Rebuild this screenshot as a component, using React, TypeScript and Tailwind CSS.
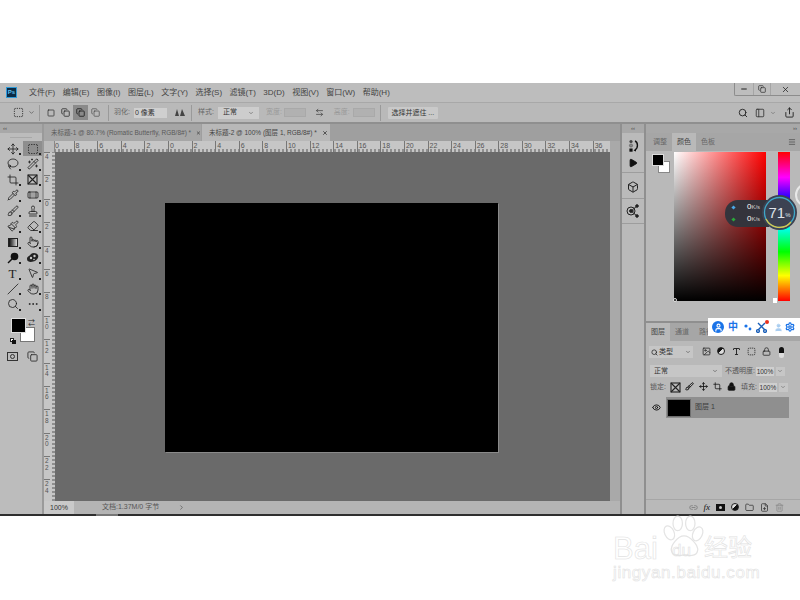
import React from 'react';
import {
  Move, SquareDashed, Lasso, WandSparkles, Crop, Pipette, Bandage, Brush, Stamp, Paintbrush, Eraser, Pointer,
  MousePointer2, Slash, Hand, Search, Ellipsis, ChevronDown, ChevronRight, Square, Copy, ArrowLeftRight, Share, PanelLeft,
  Minus, X, Play, Box, Image, Type, Lock, Eye, Link2, Folder, Trash2, FilePlus, Menu, Settings, User,
} from 'lucide-react';

const font = "font-['Liberation_Sans','Noto_Sans_CJK_SC',sans-serif]";

const menus = ['文件(F)', '编辑(E)', '图像(I)', '图层(L)', '文字(Y)', '选择(S)', '滤镜(T)', '3D(D)', '视图(V)', '窗口(W)', '帮助(H)'];
const hRuler = ['8', '6', '4', '2', '0', '2', '4', '6', '8', '10', '12', '14', '16', '18', '20', '22', '24', '26', '28', '30', '32', '34', '36'];
const vRuler = ['4', '2', '0', '2', '4', '6', '8', '10', '12', '14', '16', '18', '20', '22', '24'];

const SliceIcon = () => (
  <svg width="11" height="11" viewBox="0 0 11 11" fill="none" stroke="#222" strokeWidth="1.1">
    <rect x="1" y="1" width="9" height="9" />
    <path d="M1 1l9 9M10 1l-9 9" />
  </svg>
);
const GradientIcon = () => <div className="w-[10px] h-[9px] border border-[#222] bg-gradient-to-r from-[#111] to-[#ddd]" />;
const DodgeIcon = () => (
  <svg width="12" height="12" viewBox="0 0 12 12">
    <circle cx="7.5" cy="4.5" r="3.8" fill="#111" />
    <path d="M5 7L1 11" stroke="#111" strokeWidth="1.4" />
  </svg>
);
const SpongeIcon = () => (
  <svg width="13" height="11" viewBox="0 0 13 11">
    <path d="M1 7c0-3 3-3 4-5 2-2 6-1 7 1 1 3-1 4-3 6-2 1-8 2-8-2z" fill="#222" />
    <circle cx="5" cy="6" r="1.2" fill="#ccc" />
    <circle cx="8.5" cy="4" r="1.2" fill="#ccc" />
    <circle cx="8" cy="7.5" r="0.8" fill="#ccc" />
  </svg>
);
const HistoryIcon = () => (
  <svg width="11" height="14" viewBox="0 0 11 14">
    <circle cx="3" cy="2.5" r="1.6" fill="#444" />
    <circle cx="3" cy="6.5" r="1.6" fill="#888" stroke="#444" strokeWidth="0.5" />
    <rect x="1.4" y="9.5" width="3.2" height="3.2" fill="#111" />
    <path d="M7 2c3 1 3.5 7 0 9" fill="none" stroke="#111" strokeWidth="1.4" />
    <path d="M5.5 11.5l2.5-2v3z" fill="#111" />
  </svg>
);
const PropsIcon = () => (
  <svg width="14" height="14" viewBox="0 0 14 14" fill="none" stroke="#222" strokeWidth="1">
    <circle cx="5" cy="7" r="4" />
    <circle cx="5" cy="7" r="1.4" fill="#222" />
    <path d="M5 7l6-5M5 7l6 5M5 7h3" />
    <circle cx="11" cy="2" r="1.3" fill="#222" />
    <circle cx="11" cy="12" r="1.3" fill="#222" />
  </svg>
);

const small = { size: 12, color: '#1c1c1c', strokeWidth: 1.6 };

const tools: [React.ReactNode, React.ReactNode][] = [
  [<Move {...small} />, <SquareDashed {...small} />],
  [<Lasso {...small} />, <WandSparkles {...small} />],
  [<Crop {...small} />, <SliceIcon />],
  [<Pipette {...small} />, <Bandage {...small} />],
  [<Brush {...small} />, <Stamp {...small} />],
  [<Paintbrush {...small} />, <Eraser {...small} />],
  [<GradientIcon />, <Pointer {...small} />],
  [<DodgeIcon />, <SpongeIcon />],
  [<span className="font-['Liberation_Serif',serif] text-[13px] leading-none text-[#222]">T</span>, <MousePointer2 {...small} />],
  [<Slash {...small} />, <Hand {...small} />],
  [<Search {...small} />, <Ellipsis {...small} />],
];

const Sep = ({ className = '' }: { className?: string }) => <div className={`w-px h-[16px] bg-[#9a9a9a] ${className}`} />;

const MenuBar = () => (
  <div className="h-[19px] flex items-center bg-[#bdbdbd] relative">
    <div className="ml-[6px] w-[11px] h-[11px] bg-[#0b2a44] border border-[#2f9bd8] text-[#5cc0f0] text-[6px] leading-[9px] text-center font-bold">Ps</div>
    <div className="ml-[12px] flex gap-[7.5px] text-[8px] text-[#444]">
      {menus.map((m) => <span key={m} className="whitespace-nowrap">{m}</span>)}
    </div>
    <div className="ml-auto self-start h-[13px] w-[66px] flex items-center border-l border-b border-[#8c8c8c] rounded-bl-[2px] text-[#222]">
      <div className="w-[19px] flex justify-center border-r border-[#a5a5a5] h-full items-center"><Minus size={8} strokeWidth={3} /></div>
      <div className="w-[17px] flex justify-center border-r border-[#a5a5a5] h-full items-center"><Copy size={8} strokeWidth={2} /></div>
      <div className="flex-1 flex justify-center"><X size={9} strokeWidth={2} /></div>
    </div>
  </div>
);

const OptionsBar = () => (
  <div className="h-[22px] flex items-center bg-[#b9b9b9] border-t border-[#a8a8a8] border-b-2 border-b-[#8f8f8f] text-[7px] text-[#666]">
    <SquareDashed size={11} color="#333" className="ml-[13px]" />
    <ChevronDown size={7} color="#444" className="ml-[4px]" />
    <Sep className="ml-[4px]" />
    <Square size={8} color="#222" strokeWidth={2} className="ml-[7px]" />
    <Copy size={9} color="#222" strokeWidth={2} className="ml-[6px]" />
    <div className="ml-[3px] w-[15px] h-[15px] bg-[#8a8a8a] flex items-center justify-center"><Copy size={9} color="#111" strokeWidth={2} /></div>
    <Copy size={9} color="#333" strokeWidth={1.5} className="ml-[3px]" />
    <Sep className="ml-[8px]" />
    <span className="ml-[5px] whitespace-nowrap">羽化:</span>
    <div className="ml-[4px] w-[33px] h-[10px] bg-[#cfcfcf] text-[#333] leading-[10px] pl-[1px] whitespace-nowrap">0 像素</div>
    <svg width="10" height="7" viewBox="0 0 10 7" className="ml-[8px]"><path d="M0 7L2 0l2 7zM5 7l2-7 3 7z" fill="#444" /></svg>
    <Sep className="ml-[6px]" />
    <span className="ml-[6px] whitespace-nowrap">样式:</span>
    <div className="ml-[4px] w-[41px] h-[12px] bg-[#cdcdcd] text-[#333] flex items-center justify-between px-[5px]">正常<ChevronDown size={6} color="#444" /></div>
    <span className="ml-[7px] whitespace-nowrap text-[#999]">宽度:</span>
    <div className="ml-[2px] w-[22px] h-[9px] bg-[#b1b1b1] border border-[#a9a9a9]" />
    <ArrowLeftRight size={9} color="#444" className="ml-[9px]" />
    <span className="ml-[10px] whitespace-nowrap text-[#999]">高度:</span>
    <div className="ml-[3px] w-[22px] h-[9px] bg-[#b1b1b1] border border-[#a9a9a9]" />
    <Sep className="ml-[5px]" />
    <div className="ml-[7px] w-[50px] h-[12px] bg-[#c9c9c9] text-[#333] leading-[12px] text-center rounded-[1px] whitespace-nowrap">选择并遮住 ...</div>
    <Search size={10} color="#222" strokeWidth={2.2} className="ml-auto" />
    <PanelLeft size={10} color="#333" className="ml-[7px]" />
    <ChevronDown size={6} color="#555" className="ml-[5px]" />
    <Share size={11} color="#222" strokeWidth={2} className="ml-[8px] mr-[5px]" />
  </div>
);

const ToolCell = ({ children, active }: { children: React.ReactNode; active?: boolean }) => (
  <div className={`relative w-[19px] h-[15px] flex items-center justify-center ${active ? 'bg-[#8e8e8e]' : ''}`}>
    {children}
    <span className="absolute right-[1px] bottom-[1px] w-[2px] h-[2px] bg-[#222]" />
  </div>
);

const Toolbar = () => (
  <div className="w-[44px] shrink-0 bg-[#bcbcbc] border-r-2 border-[#9a9a9a] flex flex-col">
    <div className="h-[9px] bg-[#a8a8a8] text-[6px] leading-[8px] text-[#444] pl-[3px]">‹‹</div>
    <div className="h-[8px] flex justify-center items-center"><div className="w-[22px] h-px bg-[#a8a8a8]" /></div>
    <div className="pl-[3px] flex flex-col gap-[0.6px]">
      {tools.map((row, i) => (
        <div key={i} className="flex gap-[1px]">
          <ToolCell>{row[0]}</ToolCell>
          <ToolCell active={i === 0}>{row[1]}</ToolCell>
        </div>
      ))}
    </div>
    <div className="relative h-[32px] mt-[6px]">
      <div className="absolute left-[11px] top-0 w-[15px] h-[15px] bg-black border border-[#ddd] z-10" />
      <div className="absolute left-[20px] top-[9px] w-[15px] h-[15px] bg-white border border-[#777]" />
      <div className="absolute left-[10px] top-[20px] w-[4px] h-[4px] bg-white border border-[#222]" />
      <div className="absolute left-[12px] top-[22px] w-[4px] h-[4px] bg-[#111]" />
      <div className="absolute left-[28px] top-[1px] text-[7px] leading-none text-[#222]">⇄</div>
    </div>
    <div className="mt-[1px] flex pl-[7px] gap-[9px] items-center">
      <div className="w-[11px] h-[9px] border border-[#333] flex items-center justify-center"><div className="w-[5px] h-[5px] rounded-full border border-[#333]" /></div>
      <Copy size={11} color="#333" />
    </div>
  </div>
);

const Ruler = () => (
  <div className="h-[11px] flex bg-[#c6c6c6]">
    <div className="w-[11px] shrink-0 bg-[#bcbcbc] border-r border-[#888]" />
    <div className="flex-1 flex overflow-hidden bg-[linear-gradient(90deg,#555_1px,transparent_1px)] bg-[length:4px_3px] bg-bottom bg-repeat-x">
      <div className="w-[18.6px] shrink-0 text-[7px] leading-[9px] text-[#555]">0</div>
      {hRuler.map((n, i) => (
        <div key={i} className="w-[23.6px] shrink-0 border-l border-[#777] text-[7px] leading-[9px] text-[#555] pl-[1px]">{n}</div>
      ))}
    </div>
  </div>
);

const VRuler = () => (
  <div className="w-[11px] shrink-0 bg-[#c6c6c6] overflow-hidden flex flex-col bg-[linear-gradient(0deg,#555_1px,transparent_1px)] bg-[length:3px_4px] bg-right bg-repeat-y">
    {vRuler.map((n, i) => (
      <div key={i} className="h-[23.4px] shrink-0 border-t border-[#777] text-[6.5px] leading-[6.5px] text-[#555] pl-[1px] pt-[1px] break-all w-[6px]">{n}</div>
    ))}
  </div>
);

const Center = () => (
  <div className="flex-1 min-w-0 flex flex-col bg-[#a9a9a9]">
    <div className="h-[17px] flex bg-[#9f9f9f] text-[6.5px] text-[#5a5a5a]">
      <div className="w-[157px] bg-[#a6a6a6] flex items-center pl-[7px] gap-[5px] whitespace-nowrap">未标题-1 @ 80.7% (Romatic Butterfly, RGB/8#) * <X size={6} color="#333" strokeWidth={3} /></div>
      <div className="w-[128px] bg-[#b8b8b8] flex items-center pl-[7px] gap-[5px] whitespace-nowrap ml-[1px] text-[#444]">未标题-2 @ 100% (图层 1, RGB/8#) * <X size={6} color="#333" strokeWidth={3} /></div>
    </div>
    <div className="flex-1 flex flex-col pr-[10px] min-h-0">
      <Ruler />
      <div className="flex-1 flex min-h-0">
        <VRuler />
        <div className="flex-1 bg-[#6a6a6a] pl-[110px] pt-[51px]">
          <div className="w-[333px] h-[249px] bg-black shadow-[1px_1px_0_#8a8a8a]" />
        </div>
      </div>
    </div>
    <div className="h-[13px] flex items-center bg-[#b4b4b4] text-[7px] text-[#555] pl-0">
      <div className="w-[30px] h-full bg-[#c9c9c9] text-center leading-[13px] text-[#333]">100%</div>
      <div className="w-[114px] flex justify-between items-center pl-[28px] pr-[3px] whitespace-nowrap">文档:1.37M/0 字节<ChevronRight size={7} color="#444" /></div>
    </div>
  </div>
);

const Dock = () => (
  <div className="w-[26px] shrink-0 bg-[#bababa] border-x-2 border-[#8f8f8f] flex flex-col">
    <div className="h-[9px] bg-[#a8a8a8] text-[6px] leading-[8px] text-[#444] text-center">‹‹</div>
    <div className="h-[40px] flex flex-col items-center gap-[5px] pt-[6px] border-b border-[#9d9d9d]">
      <HistoryIcon />
      <Play size={10} fill="#111" color="#111" />
    </div>
    <div className="h-[26px] pt-[2px] flex items-center justify-center border-b border-[#9d9d9d]"><Box size={12} color="#222" /></div>
    <div className="h-[25px] flex items-center justify-center border-b border-[#9d9d9d]"><PropsIcon /></div>
  </div>
);

const PanelTabs = ({ tabs, active, menu, className = '' }: { tabs: string[]; active: number; menu?: boolean; className?: string }) => (
  <div className={`h-[18px] flex bg-[#a6a6a6] text-[7px] text-[#666] items-stretch ${className}`}>
    {tabs.map((t, i) => (
      <div key={t} className={`w-[24px] flex items-center justify-center whitespace-nowrap ${i === active ? 'bg-[#b9b9b9] text-[#444]' : ''}`}>{t}</div>
    ))}
    {menu && <Menu size={8} color="#555" strokeWidth={2.5} className="ml-auto mr-[4px] self-center" />}
  </div>
);

const ColorPanel = () => (
  <div className="h-[188px] bg-[#b9b9b9] flex flex-col">
    <PanelTabs tabs={['调整', '颜色', '色板']} active={1} menu className="pl-[2px]" />
    <div className="flex pl-[6px] pt-[1px]">
      <div className="relative w-[20px] h-[22px] shrink-0 mt-[2px]">
        <div className="absolute left-0 top-0 w-[12px] h-[12px] bg-black border border-[#ddd] z-10" />
        <div className="absolute left-[6px] top-[7px] w-[12px] h-[12px] bg-white border border-[#888]" />
      </div>
      <div className="relative ml-[2px] w-[92px] h-[149px] bg-[linear-gradient(to_top,#000,transparent),linear-gradient(to_right,#fff,#f00)]">
        <div className="absolute -left-[1px] -bottom-[1px] w-[4px] h-[4px] rounded-full border border-[#ddd]" />
      </div>
      <div className="relative ml-[12px] w-[12px] h-[149px] bg-[linear-gradient(to_bottom,#f00,#f0f_17%,#00f_33%,#0ff_50%,#0f0_67%,#ff0_83%,#f00)]">
        <div className="absolute -left-[5px] -bottom-[2px] w-[4px] h-[5px] bg-white" />
      </div>
    </div>
  </div>
);

const Tiny = ({ children, className = '' }: { children: React.ReactNode; className?: string }) => (
  <div className={`w-[14px] flex justify-center ${className}`}>{children}</div>
);

const LayersPanel = () => (
  <div className="flex-1 bg-[#b9b9b9] flex flex-col text-[7px] text-[#555]">
    <PanelTabs tabs={['图层', '通道', '路径']} active={0} />
    <div className="h-[22px] flex items-center pl-[3px]">
      <div className="w-[44px] h-[12px] bg-[#c6c6c6] flex items-center px-[2px] gap-[1px] text-[#333]"><Search size={7} color="#222" strokeWidth={2.5} />类型<ChevronDown size={6} className="ml-auto" /></div>
      <div className="ml-[6px] flex gap-[1px]">
        <Tiny><Image size={9} color="#222" /></Tiny>
        <Tiny><div className="w-[8px] h-[8px] rounded-full bg-[linear-gradient(135deg,#111_50%,#ddd_50%)] border border-[#222]" /></Tiny>
        <Tiny><Type size={9} color="#222" strokeWidth={2.5} /></Tiny>
        <Tiny><SquareDashed size={9} color="#222" strokeWidth={2} /></Tiny>
        <Tiny><Lock size={9} color="#222" /></Tiny>
        <Tiny><div className="w-[5px] h-[11px] rounded-full bg-[linear-gradient(#111_50%,#ddd_50%)]" /></Tiny>
      </div>
    </div>
    <div className="h-[16px] flex items-center pl-[4px]">
      <div className="w-[72px] h-[12px] bg-[#c6c6c6] flex items-center px-[4px] text-[#333]">正常<ChevronDown size={6} className="ml-auto" /></div>
      <span className="ml-[3px] whitespace-nowrap">不透明度:</span>
      <div className="ml-[1px] w-[18px] h-[9px] bg-[#cfcfcf] text-[#333] leading-[9px] text-center text-[6.5px]">100%</div>
      <div className="ml-[2px] w-[9px] h-[9px] bg-[#c6c6c6] flex items-center justify-center"><ChevronDown size={6} /></div>
    </div>
    <div className="h-[16px] flex items-center pl-[4px]">
      <span className="whitespace-nowrap">锁定:</span>
      <div className="ml-[3px] flex">
        <Tiny><SliceIcon /></Tiny>
        <Tiny><Brush size={9} color="#111" strokeWidth={2.4} /></Tiny>
        <Tiny><Move size={9} color="#111" strokeWidth={2.2} /></Tiny>
        <Tiny><Crop size={9} color="#111" strokeWidth={2} /></Tiny>
        <Tiny><Lock size={9} color="#111" fill="#111" /></Tiny>
      </div>
      <span className="ml-[2px] whitespace-nowrap">填充:</span>
      <div className="ml-[2px] w-[18px] h-[9px] bg-[#cfcfcf] text-[#333] leading-[9px] text-center text-[6.5px]">100%</div>
      <div className="ml-[2px] w-[9px] h-[9px] bg-[#c6c6c6] flex items-center justify-center"><ChevronDown size={6} /></div>
    </div>
    <div className="h-[21px] mt-[2px] flex items-center">
      <div className="w-[20px] flex justify-center"><Eye size={9} color="#111" strokeWidth={2.4} /></div>
      <div className="w-[123px] h-full bg-[#8f8f8f] flex items-center pl-[1px]">
        <div className="w-[24px] h-[18px] bg-black border border-[#6f6f6f]" />
        <span className="ml-[4px] text-[#3c3c3c] whitespace-nowrap">图层 1</span>
      </div>
    </div>
    <div className="flex-1" />
    <div className="h-[15px] border-t border-[#a6a6a6] flex items-center justify-end gap-[6px] pr-[16px]">
      <Link2 size={9} color="#777" />
      <span className="font-['Liberation_Serif',serif] italic text-[9px] text-[#111] leading-none">fx</span>
      <div className="w-[9px] h-[7px] bg-[#111] flex items-center justify-center"><div className="w-[3px] h-[3px] rounded-full bg-[#ccc]" /></div>
      <div className="w-[8px] h-[8px] rounded-full bg-[linear-gradient(135deg,#ddd_50%,#111_50%)] border border-[#222]" />
      <Folder size={9} color="#333" />
      <FilePlus size={9} color="#333" />
      <Trash2 size={9} color="#888" />
    </div>
  </div>
);

const SpeedWidget = () => (
  <div className="absolute left-[725px] top-[195px] w-[75px] h-[36px] flex items-center">
    <div className="absolute left-[70px] -top-[12px] w-[24px] h-[24px] rounded-full bg-[#bdbdbd] border-2 border-[#e8e8e8]" />
    <div className="w-[44px] h-[27px] bg-[#34343c] rounded-l-[13px] flex flex-col justify-center gap-[2px] pl-[7px] text-[6px] text-[#ccc] leading-[9px]">
      <div className="flex items-center gap-[9px]"><span className="w-[3px] h-[3px] bg-[#4aa8e8] rotate-45" /><span className="ml-[3px]"><b className="text-[8px] font-normal text-white">0</b>K/s</span></div>
      <div className="flex items-center gap-[9px]"><span className="w-[3px] h-[3px] bg-[#2aa83a] rotate-45" /><span className="ml-[3px]"><b className="text-[8px] font-normal text-white">0</b>K/s</span></div>
    </div>
    <div className="absolute left-[37px] top-0 w-[35px] h-[35px] rounded-full bg-[#3c4252] flex items-center justify-center text-[#dfe3ea]">
      <svg width="33" height="33" viewBox="0 0 33 33" className="absolute left-[1px] top-[1px]" fill="none" strokeWidth="1.3">
        <circle cx="16.5" cy="16.5" r="15" stroke="#3fa7c8" />
        <path d="M3 23A15 15 0 0 0 28 26" stroke="#d8c84a" />
      </svg>
      <span className="text-[15px] leading-none">71</span><span className="text-[6px] mt-[5px]">%</span>
    </div>
  </div>
);

const ImeBar = () => (
  <div className="absolute left-[708px] top-[318px] w-[92px] h-[18px] bg-white flex items-center pl-[4px] text-[#1a73e8]">
    <div className="w-[12px] h-[12px] rounded-full bg-[#1a73e8] flex items-center justify-center"><User size={9} color="#fff" strokeWidth={3} /></div>
    <span className="ml-[4px] text-[10px] font-bold leading-none">中</span>
    <svg width="8" height="7" viewBox="0 0 8 7" className="ml-[6px]"><circle cx="2" cy="2" r="1.6" fill="#1a73e8" /><circle cx="6" cy="5" r="1.4" fill="#1a73e8" /></svg>
    <div className="relative ml-[4px]">
      <svg width="11" height="11" viewBox="0 0 11 11" fill="none" stroke="#1a5fb8" strokeWidth="1.4"><path d="M2 1l7 7M9 1L2 8" /><circle cx="2" cy="9" r="1.4" /><circle cx="9" cy="9" r="1.4" /></svg>
      <span className="absolute -right-[2px] -top-[2px] w-[4px] h-[4px] rounded-full bg-[#e8321e]" />
    </div>
    <User size={9} color="#a9cdf0" fill="#a9cdf0" className="ml-[7px]" />
    <Settings size={10} color="#1a73e8" strokeWidth={3} className="ml-[2px]" />
  </div>
);

const Watermark = () => (
  <div className="absolute left-[612px] top-[514px] w-[150px] h-[84px] text-transparent [-webkit-text-stroke:0.6px_#e2e2e2] pointer-events-none">
    <svg width="44" height="46" viewBox="0 0 42 42" fill="none" stroke="#e4e4e4" strokeWidth="1.2" className="absolute left-[50px] top-0">
      <ellipse cx="7" cy="17" rx="4.5" ry="7" transform="rotate(-25 7 17)" />
      <ellipse cx="15" cy="8" rx="4.5" ry="7" />
      <ellipse cx="27" cy="8" rx="4.5" ry="7" />
      <ellipse cx="34" cy="18" rx="4.5" ry="7" transform="rotate(25 34 18)" />
      <path d="M21 20c-6 0-13 9-12 14 1 6 8 5 12 4 4 1 12 2 13-4 1-5-7-14-13-14z" />
    </svg>
    <span className="absolute left-[1px] top-[19px] text-[31px] leading-none font-['Liberation_Sans',sans-serif]">Bai</span>
    <span className="absolute left-[60px] top-[28px] text-[17px] leading-none font-['Liberation_Sans',sans-serif]">du</span>
    <span className="absolute left-[92px] top-[20px] text-[24px] leading-none font-['Noto_Sans_CJK_SC',sans-serif]">经验</span>
    <span className="absolute left-[1px] top-[50px] text-[17px] leading-none tracking-[0.6px] font-['Liberation_Sans',sans-serif] whitespace-nowrap">jingyan.baidu.com</span>
  </div>
);

export default function App() {
  return (
    <div className={`relative w-[800px] h-[600px] bg-white overflow-hidden ${font}`}>
      <div className="h-[83px]" />
      <div className="relative h-[433px] flex flex-col bg-[#b9b9b9] border-b-2 border-[#2e2e2e]">
        <MenuBar />
        <OptionsBar />
        <div className="flex-1 flex min-h-0">
          <Toolbar />
          <Center />
          <Dock />
          <div className="w-[154px] shrink-0 flex flex-col bg-[#8f8f8f]">
            <div className="h-[9px] bg-[#a8a8a8] text-[6px] leading-[8px] text-[#444] text-right pr-[3px]">››</div>
            <ColorPanel />
            <div className="h-[2px]" />
            <LayersPanel />
          </div>
        </div>
        <div className="absolute left-[96px] -bottom-[2px] w-[22px] h-[2px] bg-[#777]" />
      </div>
      <SpeedWidget />
      <ImeBar />
      <Watermark />
    </div>
  );
}
